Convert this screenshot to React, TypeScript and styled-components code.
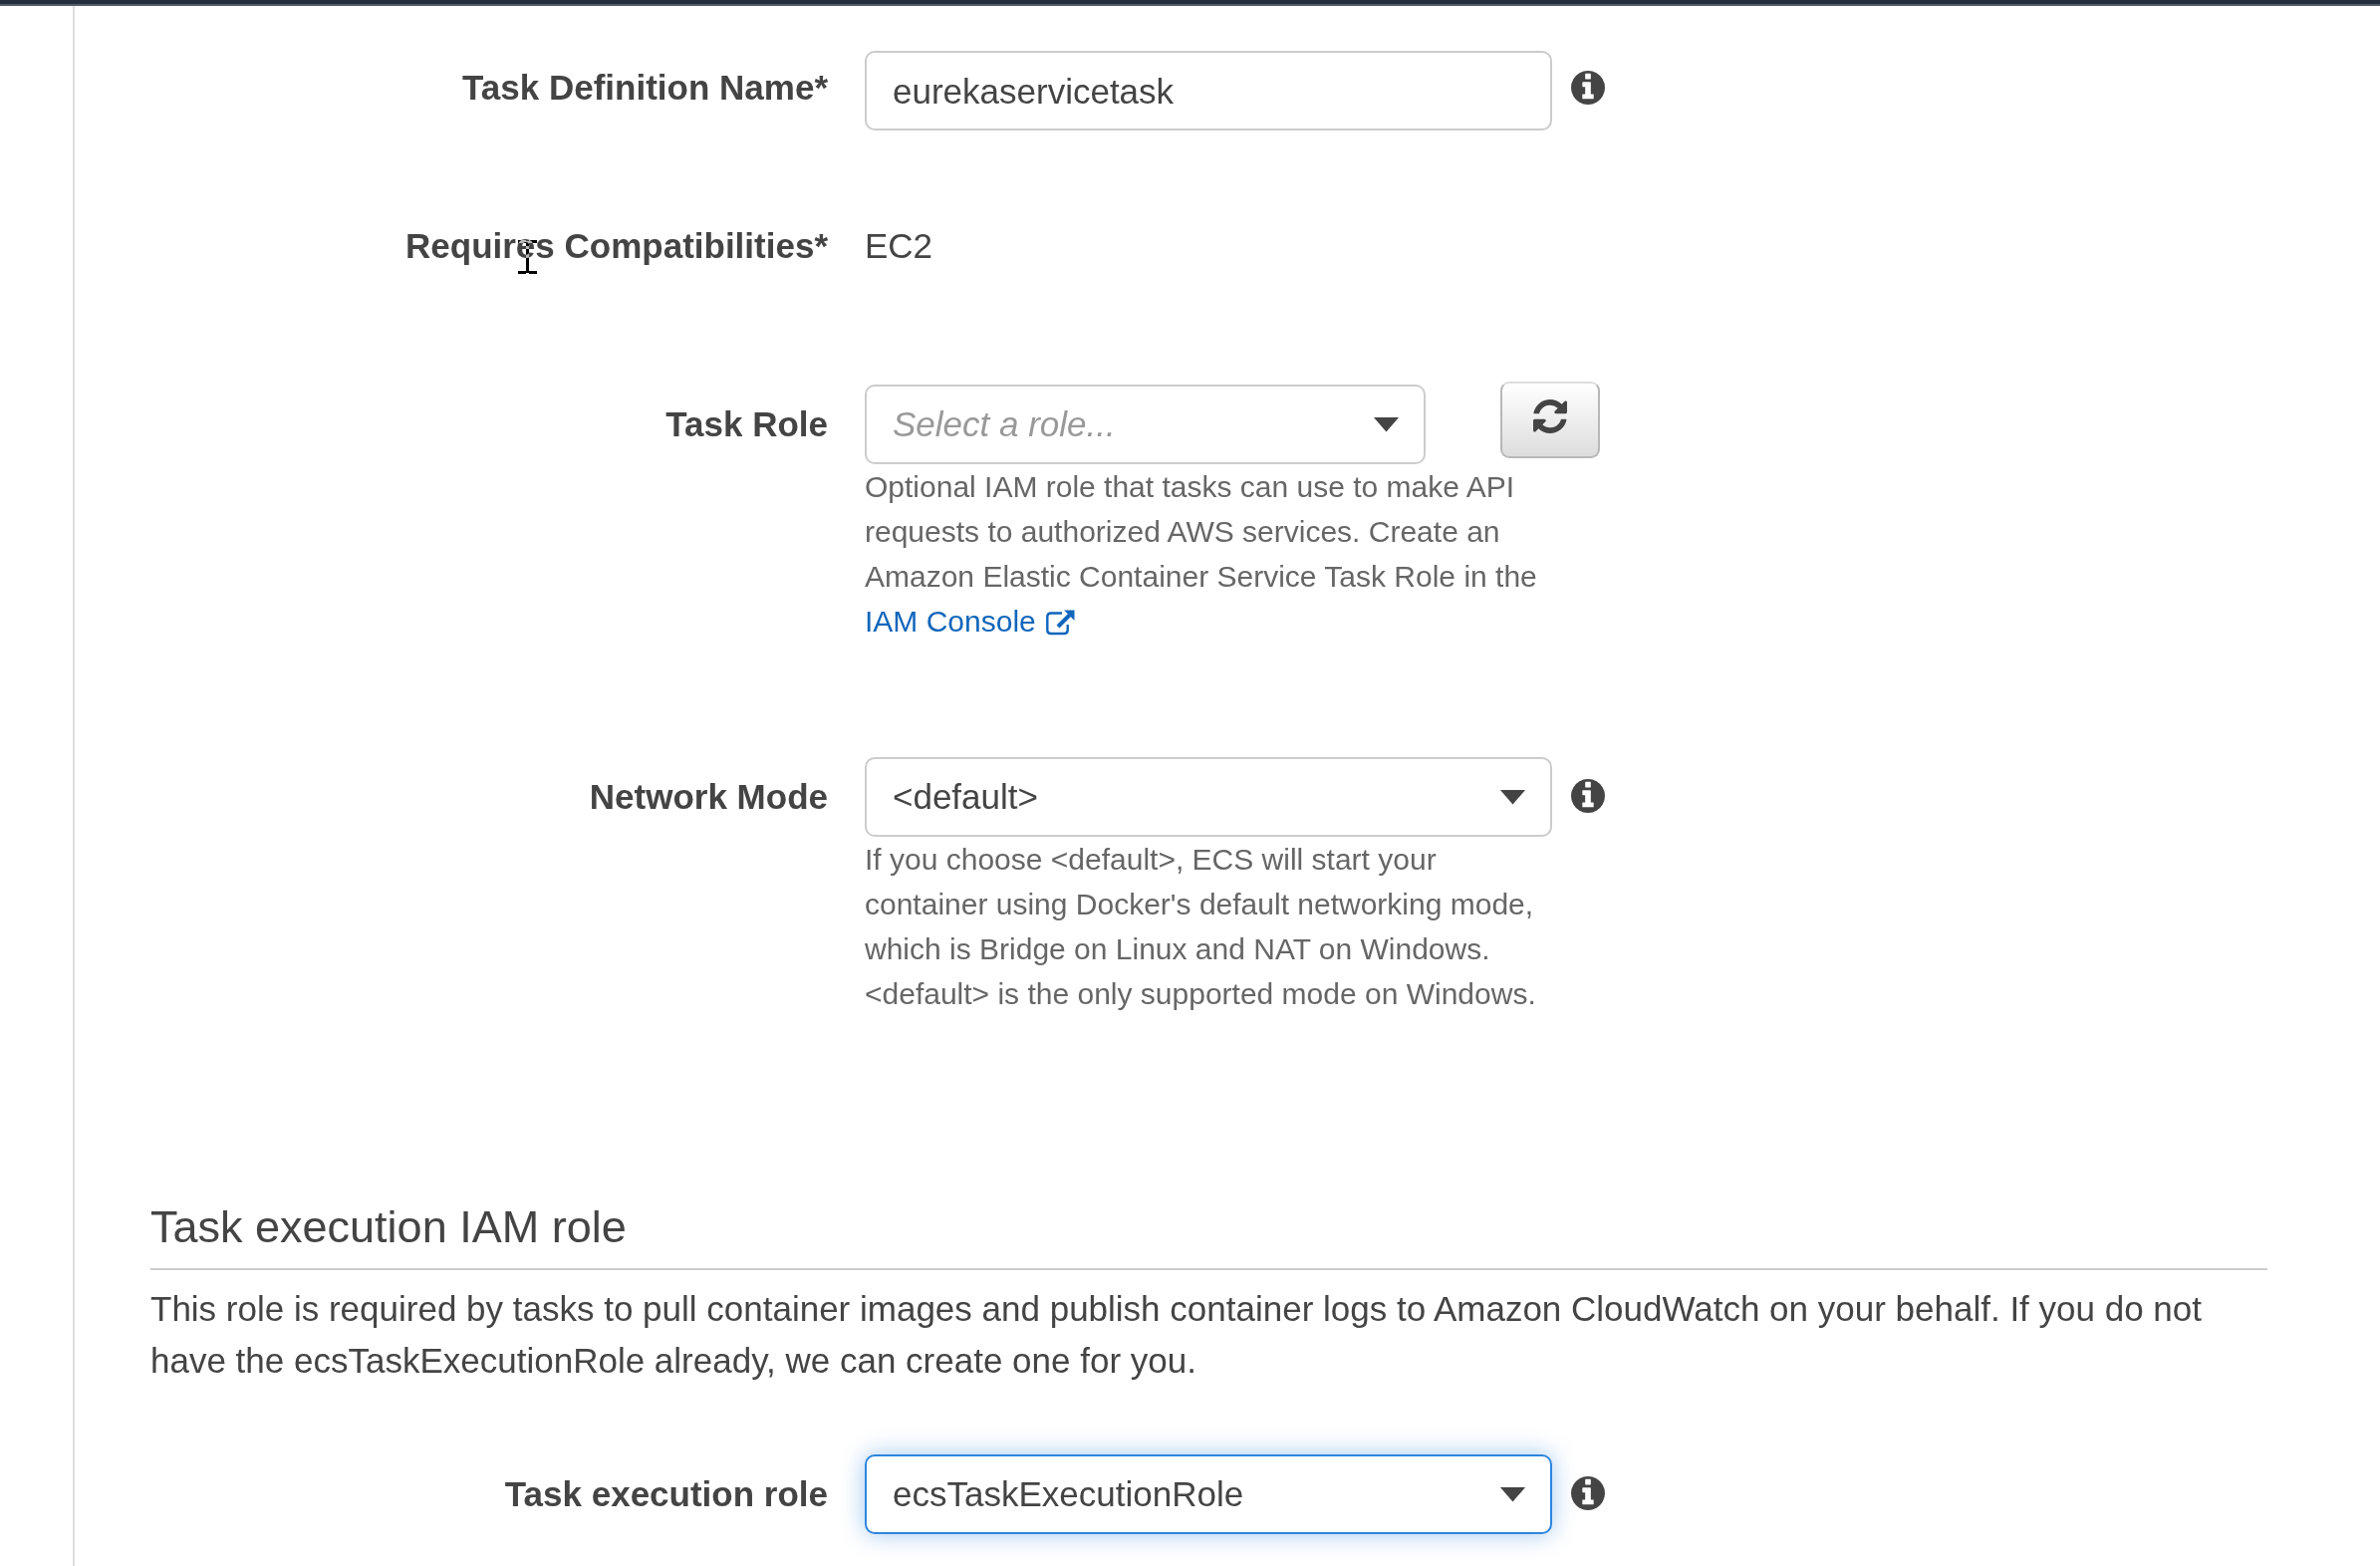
import React from "react";
import styled, { createGlobalStyle, css } from "styled-components";

const GlobalStyle = createGlobalStyle`
  * { box-sizing: border-box; }
  html, body { margin: 0; background: #fff; }
  body {
    height: 1572px;
    overflow: hidden;
    color: #444;
    font-family: Arial, "Liberation Sans", sans-serif;
    font-size: 35px;
    line-height: 52px;
  }
`;

const Page = styled.div`
  height: 1572px;
  display: flex;
  flex-direction: column;
  overflow: hidden;
`;

const TopBar = styled.header`
  flex: none;
  height: 6px;
  background: #232f3e;
  border-bottom: 2px solid #545b69;
`;

const Body = styled.div`
  flex: 1;
  display: flex;
  min-height: 0;
`;

const SideGutter = styled.aside`
  flex: none;
  width: 75px;
  border-right: 2px solid #ddd;
`;

const Content = styled.main`
  flex: none;
  width: 2201px;
  padding: 45px 0 0 76px;
`;

const Row = styled.div<{ $height: number }>`
  display: flex;
  height: ${(p) => p.$height}px;
`;

const Label = styled.label<{ $top: number }>`
  flex: none;
  width: 680px;
  margin-right: 37px;
  padding-top: ${(p) => p.$top}px;
  text-align: right;
  font-weight: 700;
`;

const LabelText = styled.span`
  position: relative;
`;

const Cursor = styled.svg`
  position: absolute;
  left: 113px;
  top: 14px;
  width: 19px;
  height: 34px;
  mix-blend-mode: difference;
`;

const FieldColumn = styled.div`
  display: flex;
  flex-direction: column;
  width: 690px;
`;

const boxStyle = css`
  height: 80px;
  border: 2px solid #ccc;
  border-radius: 10px;
  background: #fff;
`;

const TextInput = styled.input`
  ${boxStyle}
  width: 690px;
  padding: 1px 26px 0;
  color: #444;
  font: inherit;
  outline: none;
`;

const Select = styled.div<{ $width: number; $focused?: boolean }>`
  ${boxStyle}
  flex: none;
  width: ${(p) => p.$width}px;
  display: flex;
  align-items: center;
  justify-content: space-between;
  padding: 0 24.5px 0 26px;
  ${(p) =>
    p.$focused &&
    css`
      border-color: #2e86de;
      box-shadow: 0 0 25px rgba(46, 134, 222, 0.45);
    `}
`;

const Placeholder = styled.span`
  color: #999;
  font-style: italic;
`;

const Caret = styled.span`
  width: 26px;
  height: 15px;
  background: #444;
  clip-path: polygon(0 0, 100% 0, 50% 100%);
`;

const StaticValue = styled.span<{ $top: number }>`
  padding-top: ${(p) => p.$top}px;
`;

const HelpText = styled.p`
  margin: 0;
  color: #666;
  font-size: 30px;
  line-height: 45px;
  white-space: nowrap;
`;

const Link = styled.a`
  color: #1166bb;
  text-decoration: none;
`;

const ExternalSvg = styled.svg`
  width: 29px;
  height: 26px;
  margin-left: 10px;
  vertical-align: -4px;
`;

const InfoSvg = styled.svg<{ $top: number }>`
  flex: none;
  width: 34px;
  height: 34px;
  margin: ${(p) => p.$top}px 0 0 18.5px;
  fill: #444;
`;

const RefreshButton = styled.button`
  display: flex;
  justify-content: center;
  width: 100px;
  height: 77px;
  margin: -3px 0 0 -52px;
  padding: 16px 1px 0 0;
  border: 2px solid #b8b8b8;
  border-top-color: #ddd;
  border-radius: 9px;
  background: linear-gradient(#fff, #ddd);
`;

const RefreshSvg = styled.svg`
  width: 34px;
  height: 34px;
  fill: #444;
`;

const SectionTitle = styled.h2`
  height: 71px;
  margin: 0;
  border-bottom: 2px solid #ccc;
  font-size: 45px;
  font-weight: 400;
  line-height: 56px;
`;

const SectionText = styled.p`
  margin: 0;
  padding: 13px 0 68px;
  white-space: nowrap;
`;

const Stack = styled.div`
  display: flex;
  flex-direction: column;
`;

const InfoIcon = ({ top }: { top: number }) => (
  <InfoSvg viewBox="128 128 1536 1536" $top={top}>
    <path d="M1152 1376v-160q0-14-9-23t-23-9h-96v-512q0-14-9-23t-23-9h-320q-14 0-23 9t-9 23v160q0 14 9 23t23 9h96v320h-96q-14 0-23 9t-9 23v160q0 14 9 23t23 9h448q14 0 23-9t9-23zm-128-896v-192q0-14-9-23t-23-9h-192q-14 0-23 9t-9 23v192q0 14 9 23t23 9h192q14 0 23-9t9-23zm640 416q0 209-103 385.5t-279.5 279.5-385.5 103-385.5-103-279.5-279.5-103-385.5 103-385.5 279.5-279.5 385.5-103 385.5 103 279.5 279.5 103 385.5z" />
  </InfoSvg>
);

const RefreshIcon = () => (
  <RefreshSvg viewBox="128 128 1536 1536">
    <path d="M1639 1056q0 5-1 7-64 268-268 434.5t-478 166.5q-146 0-282.5-55t-243.5-157l-129 129q-19 19-45 19t-45-19-19-45v-448q0-26 19-45t45-19h448q26 0 45 19t19 45-19 45l-137 137q71 66 161 102t187 36q134 0 250-65t186-179q11-17 53-117 8-23 30-23h192q13 0 22.5 9.5t9.5 22.5zm25-800v448q0 26-19 45t-45 19h-448q-26 0-45-19t-19-45 19-45l138-138q-148-137-349-137-134 0-250 65t-186 179q-11 17-53 117-8 23-30 23h-199q-13 0-22.5-9.5t-9.5-22.5v-7q65-268 270-434.5t480-166.5q146 0 284 55.5t245 156.5l130-129q19-19 45-19t45 19 19 45z" />
  </RefreshSvg>
);

const ExternalIcon = () => (
  <ExternalSvg viewBox="0 0 29 26" fill="none" stroke="#1166bb">
    <path d="M16 3.5H5Q1.3 3.5 1.3 7V20.5Q1.3 24 5 24H18Q21.7 24 21.7 20.5V15" strokeWidth="2.4" />
    <path d="M12 17L23.5 5.5" strokeWidth="4" />
    <path d="M18 0.5H28.5V11Z" fill="#1166bb" stroke="none" />
  </ExternalSvg>
);

const TextCursor = () => (
  <Cursor viewBox="0 0 19 34" fill="#fff">
    <path d="M0 0H8V1H11V0H19V3H11V31H19V34H11V33H8V34H0V31H8V3H0Z" />
  </Cursor>
);

export default function App() {
  return (
    <>
      <GlobalStyle />
      <Page>
        <TopBar />
        <Body>
          <SideGutter />
          <Content>
            <Stack>
              <Row $height={160}>
                <Label $top={11}>Task Definition Name*</Label>
                <TextInput defaultValue="eurekaservicetask" />
                <InfoIcon top={20} />
              </Row>
              <Row $height={175}>
                <Label $top={10}>
                  <LabelText>
                    Requires Compatibilities*
                    <TextCursor />
                  </LabelText>
                </Label>
                <StaticValue $top={10}>EC2</StaticValue>
              </Row>
              <Row $height={374}>
                <Label $top={14}>Task Role</Label>
                <FieldColumn>
                  <Select $width={563}>
                    <Placeholder>Select a role...</Placeholder>
                    <Caret />
                  </Select>
                  <HelpText>
                    Optional IAM role that tasks can use to make API
                    <br />
                    requests to authorized AWS services. Create an
                    <br />
                    Amazon Elastic Container Service Task Role in the
                    <br />
                    <Link>
                      IAM Console
                      <ExternalIcon />
                    </Link>
                  </HelpText>
                </FieldColumn>
                <RefreshButton aria-label="Refresh">
                  <RefreshIcon />
                </RefreshButton>
              </Row>
              <Row $height={444}>
                <Label $top={14}>Network Mode</Label>
                <FieldColumn>
                  <Select $width={690}>
                    <span>&lt;default&gt;</span>
                    <Caret />
                  </Select>
                  <HelpText>
                    If you choose &lt;default&gt;, ECS will start your
                    <br />
                    container using Docker's default networking mode,
                    <br />
                    which is Bridge on Linux and NAT on Windows.
                    <br />
                    &lt;default&gt; is the only supported mode on Windows.
                  </HelpText>
                </FieldColumn>
                <InfoIcon top={22} />
              </Row>
            </Stack>
            <SectionTitle>Task execution IAM role</SectionTitle>
            <SectionText>
              This role is required by tasks to pull container images and publish container logs to
              Amazon CloudWatch on your behalf. If you do not
              <br />
              have the ecsTaskExecutionRole already, we can create one for you.
            </SectionText>
            <Row $height={80}>
              <Label $top={14}>Task execution role</Label>
              <Select $width={690} $focused>
                <span>ecsTaskExecutionRole</span>
                <Caret />
              </Select>
              <InfoIcon top={22} />
            </Row>
          </Content>
        </Body>
      </Page>
    </>
  );
}
